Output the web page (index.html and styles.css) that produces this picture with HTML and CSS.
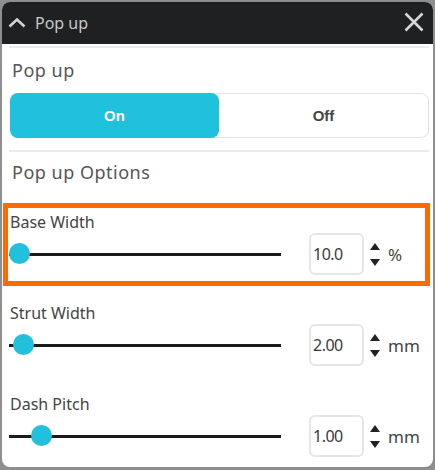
FILE: index.html
```html
<!DOCTYPE html>
<html>
<head>
<meta charset="utf-8">
<link rel="stylesheet" href="styles.css">
</head>
<body>
<div class="panel">
  <div class="titlebar">
    <svg class="chevron" width="18" height="10" viewBox="0 0 18 10"><polyline points="1.5,8.5 9,1.5 16.5,8.5" fill="none" stroke="#d2d2d2" stroke-width="2.6"/></svg>
    <span class="title">Pop up</span>
    <svg class="close" width="20" height="20" viewBox="0 0 20 20"><path d="M1.5 1.5 L18.5 18.5 M18.5 1.5 L1.5 18.5" stroke="#d6d6d6" stroke-width="2.6" fill="none"/></svg>
  </div>
  <div class="top">
    <div class="rule"></div>
    <div class="heading">Pop up</div>
    <div class="toggle">
      <div class="seg seg-on">On</div>
      <div class="seg">Off</div>
    </div>
    <div class="rule rule-2"></div>
    <div class="heading heading-2">Pop up Options</div>
  </div>
  <div class="params">
    <div class="param selected">
      <div class="label">Base Width</div>
      <div class="row">
        <div class="slider"><div class="track"></div><div class="thumb" style="left:0px"></div></div>
        <div class="field">10.0</div>
        <div class="spin"><span class="up"></span><span class="down"></span></div>
        <div class="unit">%</div>
      </div>
    </div>
    <div class="param">
      <div class="label">Strut Width</div>
      <div class="row">
        <div class="slider"><div class="track"></div><div class="thumb" style="left:4px"></div></div>
        <div class="field">2.00</div>
        <div class="spin"><span class="up"></span><span class="down"></span></div>
        <div class="unit">mm</div>
      </div>
    </div>
    <div class="param">
      <div class="label">Dash Pitch</div>
      <div class="row">
        <div class="slider"><div class="track"></div><div class="thumb" style="left:22px"></div></div>
        <div class="field">1.00</div>
        <div class="spin"><span class="up"></span><span class="down"></span></div>
        <div class="unit">mm</div>
      </div>
    </div>
  </div>
</div>
</body>
</html>
```
FILE: styles.css
```css
html, body {
  margin: 0;
  padding: 0;
  background: #8e8e8e;
}
body {
  width: 435px;
  height: 470px;
  overflow: hidden;
  font-family: "Noto Sans", "Open Sans", sans-serif;
}
.panel {
  margin: 2px 2px 0 2px;
  width: 431px;
  height: 465px;
  background: #ffffff;
  border-radius: 8px;
  overflow: hidden;
  display: flex;
  flex-direction: column;
}
.titlebar {
  height: 42px;
  flex: none;
  background: #1f2022;
  display: flex;
  align-items: center;
  padding: 0 9px 0 6px;
}
.chevron {
  margin-top: -1px;
}
.title {
  margin-left: 9px;
  color: #c9c9c9;
  font-size: 16px;
  line-height: 20px;
  flex: 1;
}
.close {
  margin-top: -2px;
}
.top {
  padding: 0 4px 0 7px;
  display: flex;
  flex-direction: column;
}
.rule {
  height: 2px;
  background: #ebebeb;
  margin-top: 2px;
}
.rule-2 {
  margin-top: 12px;
}
.heading {
  margin-top: 10px;
  margin-left: 3px;
  font-size: 18px;
  line-height: 24px;
  letter-spacing: 0.5px;
  color: #555555;
}
.heading-2 {
  margin-top: 8px;
}
.toggle {
  margin-top: 11px;
  margin-left: 1px;
  height: 45px;
  box-sizing: border-box;
  border: 1px solid #e2e2e2;
  border-radius: 8px;
  display: flex;
}
.seg {
  flex: 1;
  display: flex;
  align-items: center;
  justify-content: center;
  font-family: "Liberation Sans", Arial, sans-serif;
  font-weight: bold;
  font-size: 15px;
  color: #454545;
}
.seg-on {
  margin: -1px 0 -1px -1px;
  background: #1fc1dd;
  color: #ffffff;
  border-radius: 8px;
}
.params {
  margin-top: 19px;
  padding-left: 1px;
  display: flex;
  flex-direction: column;
  gap: 8px;
}
.param {
  width: 427px;
  height: 83px;
  flex: none;
  box-sizing: border-box;
  border: 5px solid transparent;
}
.param.selected {
  border-color: #fb6a05;
}
.label {
  margin-top: 4px;
  padding-left: 2px;
  font-size: 16px;
  line-height: 20px;
  color: #444444;
}
.row {
  height: 44px;
  display: flex;
  align-items: center;
  padding-left: 1px;
}
.slider {
  position: relative;
  width: 272px;
  height: 22px;
  display: flex;
  align-items: center;
}
.track {
  width: 100%;
  height: 3px;
  background: #1b1b1b;
}
.thumb {
  position: absolute;
  top: 0;
  width: 21px;
  height: 21px;
  border-radius: 50%;
  background: #22c0dc;
}
.field {
  margin-left: 28px;
  width: 55px;
  height: 42px;
  box-sizing: border-box;
  border: 2px solid #e6e6e6;
  border-radius: 6px;
  display: flex;
  align-items: center;
  padding-left: 2px;
  font-size: 16px;
  color: #3a3a3a;
  letter-spacing: -0.5px;
}
.spin {
  margin-left: 6px;
  width: 10px;
  display: flex;
  flex-direction: column;
  gap: 9px;
}
.up, .down {
  display: block;
  width: 0;
  height: 0;
  border-left: 5px solid transparent;
  border-right: 5px solid transparent;
}
.up {
  border-bottom: 7px solid #222222;
}
.down {
  border-top: 7px solid #222222;
}
.unit {
  margin-left: 8px;
  font-size: 17px;
  color: #444444;
}
```
